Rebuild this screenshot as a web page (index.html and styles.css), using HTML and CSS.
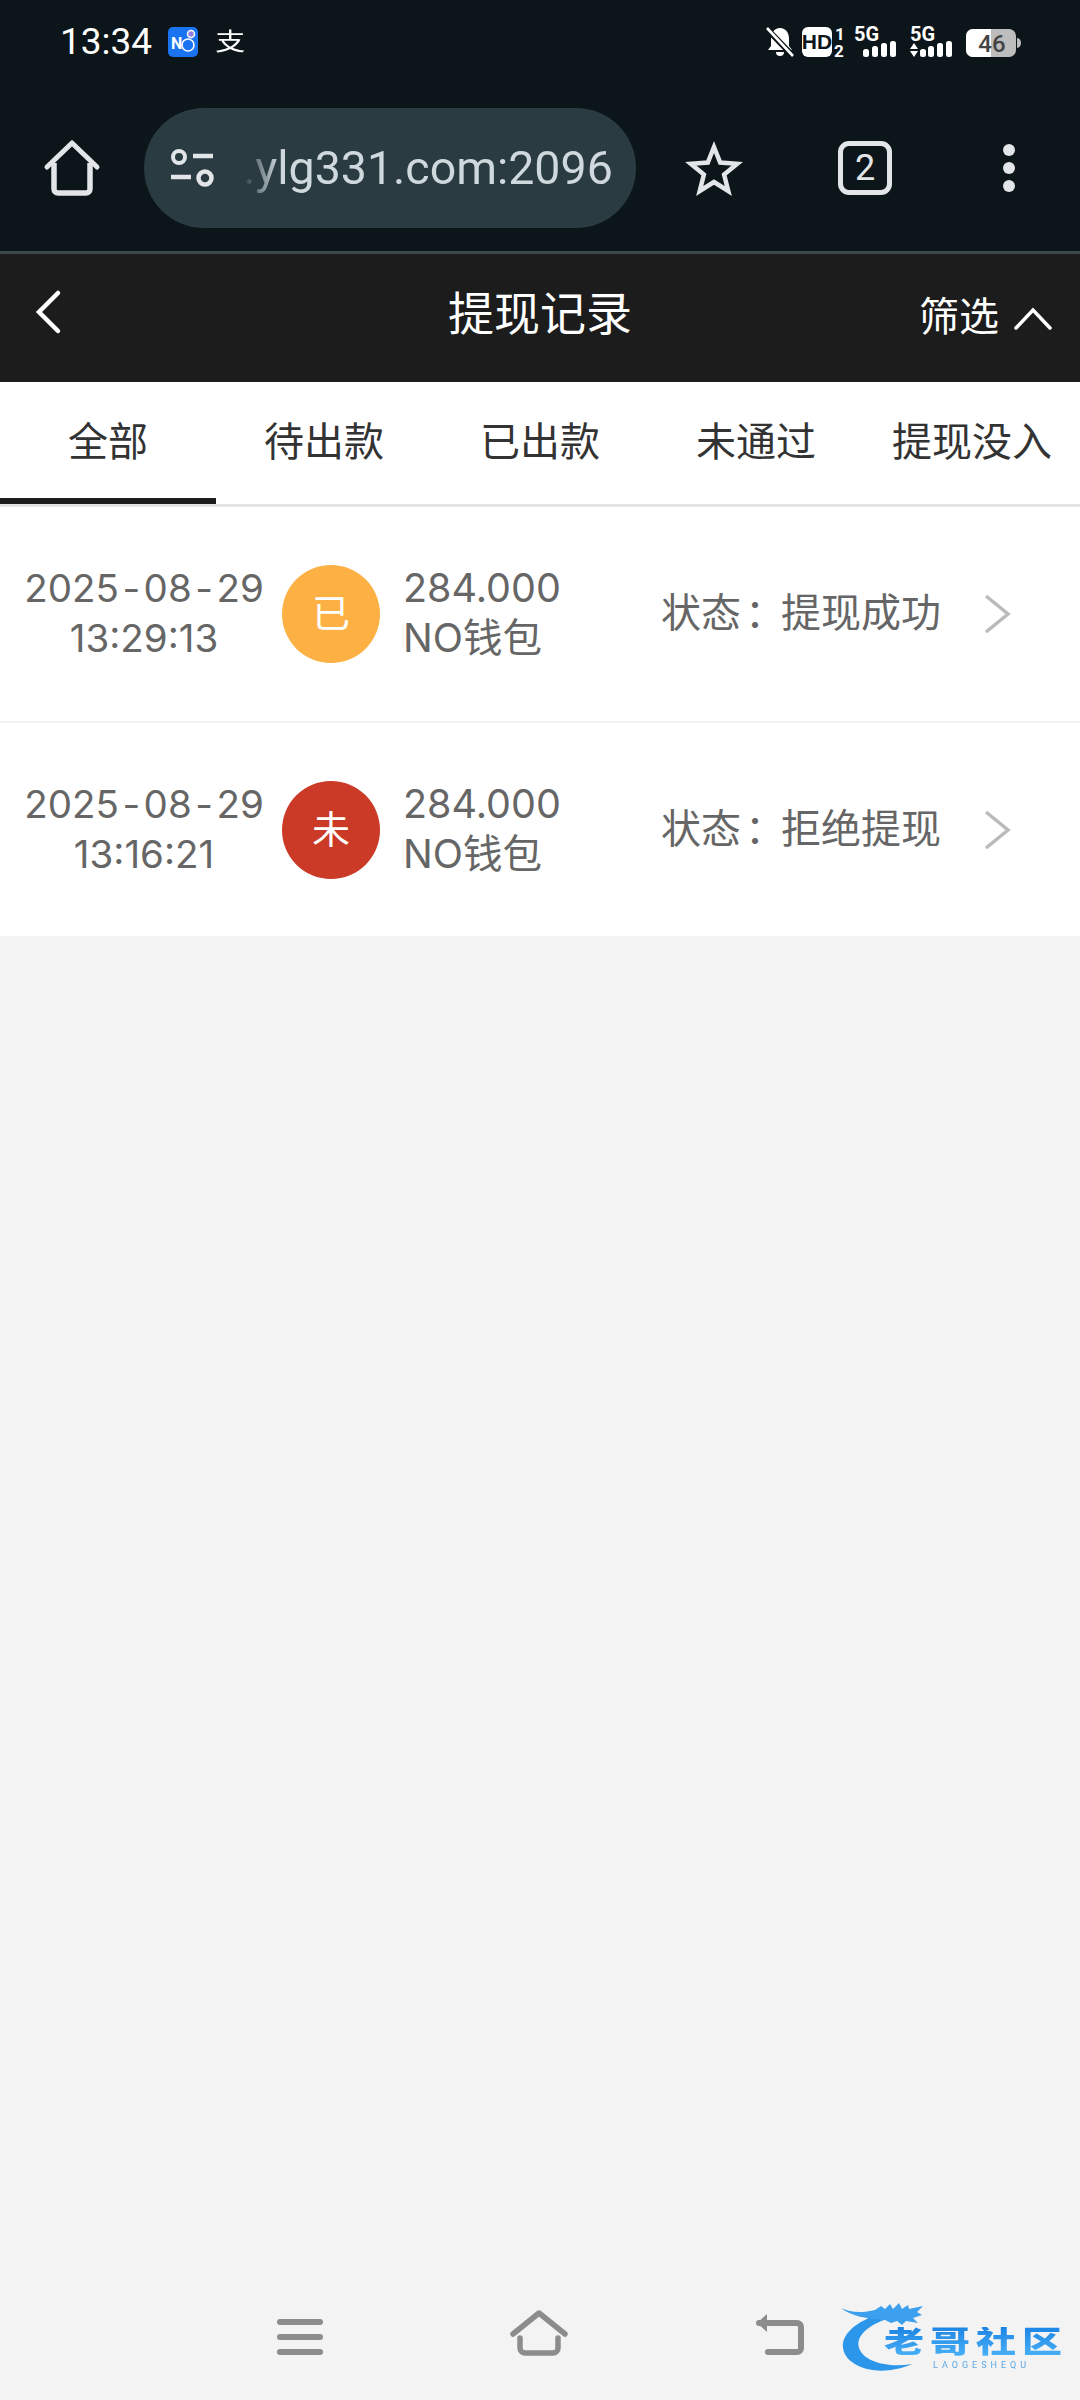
FILE: index.html

```html
<!DOCTYPE html>
<html lang="en">
<head>
    <meta charset="UTF-8">
    <title>提现记录</title>
    <link rel="stylesheet" href="styles.css">
</head>
<body>
    <div class="chrome">
        <div class="status">
            <span class="clock">13:34</span>
            <svg class="no-icon" width="30" height="30" viewBox="0 0 30 30">
                <rect width="30" height="30" rx="5" fill="#1a73f0"/>
                <text x="3" y="22" class="no-letter">N</text>
                <circle cx="20" cy="18" r="6" fill="none" stroke="#fff" stroke-width="1.6"/>
                <circle cx="23" cy="7" r="3.5" fill="#8e7fe0" stroke="#fff" stroke-width="1.5"/>
            </svg>
            <span class="pay">支</span>
            <div class="status-right">
                <svg width="28" height="30" viewBox="0 0 28 30">
                    <path d="M14 1c6 0 9 5 9 11v7l3 4H2l3-4v-7C5 6 8 1 14 1z" fill="#fff"/>
                    <path d="M10 25h8a4 4 0 0 1-8 0z" fill="#fff"/>
                    <path d="M0 1l27 28" stroke="#0c1519" stroke-width="6"/>
                    <path d="M1 1l26 28" stroke="#fff" stroke-width="2.6"/>
                </svg>
                <svg class="hd" width="42" height="30" viewBox="0 0 42 30">
                    <rect width="30" height="30" rx="6" fill="#fff"/>
                    <text x="15" y="22" text-anchor="middle" class="hd-text">HD</text>
                    <text x="38" y="13" text-anchor="middle" class="sim">1</text>
                    <text x="37" y="30" text-anchor="middle" class="sim">2</text>
                </svg>
                <svg class="net" width="44" height="30" viewBox="0 0 44 30">
                    <text x="0" y="14" class="five-g">5G</text>
                    <rect x="9" y="22" width="6" height="8" rx="2.5" fill="#fff"/>
                    <rect x="18" y="19" width="6" height="11" rx="2.5" fill="#fff"/>
                    <rect x="27" y="16" width="6" height="14" rx="2.5" fill="#fff"/>
                    <rect x="36" y="14" width="6" height="16" rx="2.5" fill="#fff"/>
                </svg>
                <svg class="net" width="44" height="30" viewBox="0 0 44 30">
                    <text x="0" y="14" class="five-g">5G</text>
                    <path d="M4 16l4 6H0zM0 24h8l-4 6z" fill="#fff"/>
                    <rect x="10" y="22" width="6" height="8" rx="2.5" fill="#fff"/>
                    <rect x="18" y="19" width="6" height="11" rx="2.5" fill="#fff"/>
                    <rect x="27" y="16" width="6" height="14" rx="2.5" fill="#fff"/>
                    <rect x="36" y="14" width="6" height="16" rx="2.5" fill="#fff"/>
                </svg>
                <svg class="battery" width="54" height="28" viewBox="0 0 54 28">
                    <rect x="0" y="0" width="50" height="28" rx="7" fill="#bdbdbd"/>
                    <path d="M7 0h18v28H7a7 7 0 0 1-7-7V7a7 7 0 0 1 7-7z" fill="#fff"/>
                    <path d="M51 9a4 5 0 0 1 0 10z" fill="#bdbdbd"/>
                    <text x="26" y="23" text-anchor="middle" class="battery-text">46</text>
                </svg>
            </div>
        </div>
        <div class="toolbar">
            <svg class="home-icon" width="54" height="56" viewBox="0 0 54 56">
                <path d="M2 27L27 3l25 24" fill="none" stroke="#e3e6e8" stroke-width="5" stroke-linecap="round" stroke-linejoin="round"/>
                <path d="M9 23v26a4 4 0 0 0 4 4h28a4 4 0 0 0 4-4V23" fill="none" stroke="#e3e6e8" stroke-width="5.5"/>
            </svg>
            <div class="url-pill">
                <svg width="44" height="38" viewBox="0 0 44 38">
                    <circle cx="9" cy="8" r="6" fill="none" stroke="#e3e6e8" stroke-width="4"/>
                    <circle cx="35" cy="29" r="6.5" fill="none" stroke="#e3e6e8" stroke-width="4.5"/>
                    <path d="M23 7h20M1 28h20" stroke="#e3e6e8" stroke-width="4.5"/>
                </svg>
                <span class="url-text">.ylg331.com:2096</span>
            </div>
            <svg class="star-icon" width="52" height="50" viewBox="0 0 52 50">
                <path d="M26 4l6.2 15.6 17 1.2-13.1 10.8 4.2 16.400L26 39l-14.300 9 4.200-16.400L2.800 20.800l17-1.200z" fill="none" stroke="#e3e6e8" stroke-width="4.500"/>
            </svg>
            <div class="tab-count">2</div>
            <div class="dots"><i></i><i></i><i></i></div>
        </div>
    </div>

    <div class="header">
        <svg class="back" width="26" height="44" viewBox="0 0 26 44">
            <path d="M23 3L4 22l19 19" fill="none" stroke="#fff" stroke-width="4.500" stroke-linecap="round"/>
        </svg>
        <h1>提现记录</h1>
        <div class="filter">
            <span>筛选</span>
            <svg width="38" height="24" viewBox="0 0 38 24">
                <path d="M2 22L19 4l17 18" fill="none" stroke="#fff" stroke-width="3.500" stroke-linecap="round"/>
            </svg>
        </div>
    </div>

    <div class="tabs">
        <div class="tab active">全部</div>
        <div class="tab">待出款</div>
        <div class="tab">已出款</div>
        <div class="tab">未通过</div>
        <div class="tab">提现没入</div>
    </div>

    <div class="list">
        <div class="row">
            <div class="date">2025<span class="dash">-</span>08<span class="dash">-</span>29<br>13:29:13</div>
            <div class="badge orange">已</div>
            <div class="amount">284.000<br>NO钱包</div>
            <div class="state">状态<span class="colon">：</span>提现成功</div>
            <svg class="arrow" width="28" height="40" viewBox="0 0 28 40">
                <path d="M3 2l22 18L3 38" fill="none" stroke="#bbb" stroke-width="3.500"/>
            </svg>
        </div>
        <div class="row">
            <div class="date">2025<span class="dash">-</span>08<span class="dash">-</span>29<br>13:16:21</div>
            <div class="badge red">未</div>
            <div class="amount">284.000<br>NO钱包</div>
            <div class="state">状态<span class="colon">：</span>拒绝提现</div>
            <svg class="arrow" width="28" height="40" viewBox="0 0 28 40">
                <path d="M3 2l22 18L3 38" fill="none" stroke="#bbb" stroke-width="3.500"/>
            </svg>
        </div>
    </div>

    <div class="spacer"></div>

    <div class="navbar">
        <svg width="46" height="38" viewBox="0 0 46 38">
            <path d="M3 4h40M3 19h40M3 34h40" stroke="#8c8c8c" stroke-width="6" stroke-linecap="round"/>
        </svg>
        <svg width="58" height="46" viewBox="0 0 58 46">
            <path d="M3 24L29 3l26 21" fill="none" stroke="#8c8c8c" stroke-width="5.500" stroke-linecap="round" stroke-linejoin="round"/>
            <path d="M10 28v10a5 5 0 0 0 5 5h28a5 5 0 0 0 5-5V28" fill="none" stroke="#8c8c8c" stroke-width="5.500" stroke-linecap="round"/>
        </svg>
        <svg width="50" height="44" viewBox="0 0 50 44">
            <path d="M4 11h38a4 4 0 0 1 4 4v21a4 4 0 0 1-4 4H13" fill="none" stroke="#8c8c8c" stroke-width="6" stroke-linecap="round"/>
            <path d="M12 2v18L2 11z" fill="#8c8c8c"/>
        </svg>
    </div>

    <div class="logo">
        <svg class="dragon" width="96" height="74" viewBox="0 0 96 74">
            <path d="M46 10C16 18 -2 34 4 50c6 16 36 26 68 12C48 66 24 60 19 46 15 34 30 20 58 14z" fill="#2b96ea"/>
            <path d="M1 6c10 5 22 5 34 2l6-4 4 3 5-5 3 5 6-6 3 6 6-4 1 4 14-3-6 6 5 3-9 3 5 5-12-2-4 4-5-4-6 2-6-3C28 17 10 14 1 6z" fill="#3da0ee"/>
        </svg>
        <div class="logo-words">
            <div class="logo-name">老哥社区</div>
            <div class="logo-sub">LAOGESHEQU</div>
        </div>
    </div>
</body>
</html>
```

FILE: styles.css

```css
* {
    box-sizing: border-box;
}
html, body {
    margin: 0;
    padding: 0;
}
body {
    position: relative;
    width: 1080px;
    height: 2400px;
    display: flex;
    flex-direction: column;
    overflow: hidden;
    background-color: #f3f3f3;
    font-family: Roboto, "Noto Sans CJK SC", sans-serif;
    color: #666;
}
svg {
    display: block;
    flex: none;
    overflow: visible;
}

/* browser chrome */
.chrome {
    height: 254px;
    background-color: #0c1519;
    border-bottom: 3px solid #3d4649;
}
.status {
    height: 84px;
    padding: 27px 60px 0 60px;
    display: flex;
    align-items: flex-start;
}
.clock {
    font-size: 37px;
    line-height: 30px;
    color: #fff;
}
.no-icon {
    margin-left: 16px;
}
.no-letter {
    font: 700 16px Roboto, sans-serif;
    fill: #fff;
}
.pay {
    margin-left: 17px;
    font-size: 30px;
    line-height: 30px;
    color: #fff;
    transform: scaleY(.8);
}
.status-right {
    margin-left: auto;
    display: flex;
    align-items: flex-start;
}
.status-right .hd {
    margin-left: 8px;
}
.status-right .net {
    margin-left: 10px;
}
.status-right .net + .net {
    margin-left: 12px;
}
.status-right .battery {
    margin-left: 12px;
    margin-top: 2px;
}
.hd-text {
    font: 700 21px "Liberation Sans", sans-serif;
    fill: #0c1519;
}
.sim {
    font: 700 17px Roboto, sans-serif;
    fill: #fff;
}
.five-g {
    font: 700 20px Roboto, sans-serif;
    fill: #fff;
}
.battery-text {
    font: 500 24px Roboto, sans-serif;
    fill: #444;
}
.toolbar {
    height: 120px;
    margin-top: 24px;
    padding-left: 45px;
    display: flex;
    align-items: center;
}
.url-pill {
    width: 492px;
    height: 120px;
    margin-left: 45px;
    padding-left: 26px;
    border-radius: 60px;
    background-color: #2a3c42;
    display: flex;
    align-items: center;
}
.url-text {
    margin-left: 29px;
    font-size: 46.500px;
    line-height: 60px;
    color: #cfd8dc;
    white-space: nowrap;
    -webkit-mask-image: linear-gradient(to right, transparent, #000 36px);
    mask-image: linear-gradient(to right, transparent, #000 36px);
}
.star-icon {
    margin-left: 52px;
}
.tab-count {
    width: 54px;
    height: 54px;
    margin-left: 98px;
    border: 5px solid #e3e6e8;
    border-radius: 11px;
    color: #e3e6e8;
    font-size: 36px;
    line-height: 44px;
    text-align: center;
}
.dots {
    margin-left: 111px;
    display: flex;
    flex-direction: column;
    gap: 6px;
}
.dots i {
    display: block;
    width: 12px;
    height: 12px;
    border-radius: 50%;
    background-color: #e3e6e8;
}

/* page header */
.header {
    position: relative;
    height: 128px;
    background-color: #1c1c1c;
    display: flex;
    align-items: center;
    justify-content: center;
    padding-bottom: 16px;
}
.header h1 {
    margin: 0;
    font-size: 46px;
    font-weight: 400;
    color: #fff;
}
.back {
    position: absolute;
    left: 35px;
    top: 36px;
}
.filter {
    position: absolute;
    right: 28px;
    top: 36px;
    display: flex;
    align-items: center;
    gap: 15px;
    font-size: 40px;
    line-height: 56px;
    color: #fff;
}

/* tabs */
.tabs {
    height: 125px;
    background-color: #fff;
    border-bottom: 3px solid #e4e4e4;
    display: flex;
}
.tab {
    flex: 1;
    height: 122px;
    font-size: 40px;
    line-height: 122px;
    text-align: center;
    color: #333;
}
.tab.active {
    border-bottom: 6px solid #1c1c1c;
}

/* records */
.list {
    background-color: #fff;
}
.row {
    height: 216px;
    padding-left: 20px;
    display: flex;
    align-items: center;
    border-bottom: 2px solid #f2f2f2;
}
.row:last-child {
    height: 213px;
    border-bottom: none;
}
.date {
    width: 248px;
    padding-bottom: 2px;
    font-family: Inter, "Noto Sans CJK SC", sans-serif;
    font-size: 38.500px;
    line-height: 50px;
    text-align: center;
    white-space: nowrap;
}
.dash {
    margin: 0 3.500px;
}
.badge {
    width: 98px;
    height: 98px;
    margin-left: 14px;
    border-radius: 50%;
    font-size: 38px;
    line-height: 98px;
    text-align: center;
    color: #fff;
}
.orange {
    background-color: #fdb043;
}
.red {
    background-color: #cb3a26;
}
.amount {
    width: 258px;
    margin-left: 23px;
    padding-bottom: 2px;
    font-family: Inter, "Noto Sans CJK SC", sans-serif;
    font-size: 39.500px;
    line-height: 50px;
    white-space: nowrap;
}
.state {
    width: 321px;
    font-size: 40px;
    line-height: 50px;
    white-space: nowrap;
}
.colon {
    margin-left: 4px;
    letter-spacing: -4px;
}
.arrow {
    margin-left: 1px;
}

.spacer {
    flex: 1;
}

/* phone nav */
.navbar {
    height: 128px;
    padding: 0 275px 44px 277px;
    display: flex;
    align-items: flex-end;
    justify-content: space-between;
}
.logo {
    position: absolute;
    left: 840px;
    top: 2302px;
    display: flex;
    align-items: flex-start;
    filter: blur(.5px);
}
.logo-words {
    margin-left: -52px;
    margin-top: 20px;
}
.logo-name {
    font-size: 40px;
    line-height: 40px;
    font-weight: 900;
    letter-spacing: 6px;
    white-space: nowrap;
    transform: scaleY(.75);
    background: linear-gradient(to bottom, #1c84e4, #4ab2f6);
    -webkit-background-clip: text;
    background-clip: text;
    color: transparent;
}
.logo-sub {
    margin-top: -3px;
    margin-left: 49px;
    font-size: 9px;
    line-height: 12px;
    letter-spacing: 4px;
    color: #5aa8e8;
}
```
